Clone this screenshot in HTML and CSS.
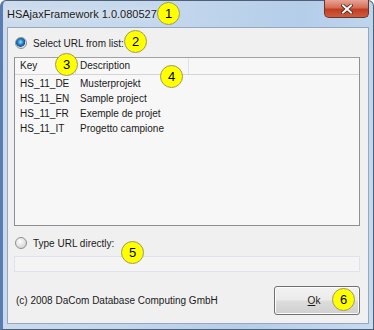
FILE: index.html
```html
<!DOCTYPE html>
<html lang="en">
<head>
    <meta charset="UTF-8">
    <title>HSAjaxFramework</title>
    <link rel="stylesheet" href="styles.css">
</head>
<body>
    <div class="window">
        <div class="titlebar">
            <span class="title">HSAjaxFramework 1.0.080527</span>
            <div class="close">
                <svg width="12" height="10" viewBox="0 0 12 10">
                    <path d="M2 1.5 L10 8.5 M10 1.5 L2 8.5" stroke="#4a2018" stroke-width="3.6" stroke-linecap="square"/>
                    <path d="M2 1.5 L10 8.5 M10 1.5 L2 8.5" stroke="#ffffff" stroke-width="2" stroke-linecap="square"/>
                </svg>
            </div>
        </div>
        <div class="client">
            <div class="option">
                <span class="radio checked"></span>
                <span>Select URL from list:</span>
            </div>
            <div class="listbox">
                <div class="list-head">
                    <span class="col-key">Key</span>
                    <span class="col-desc">Description</span>
                    <span class="col-rest"></span>
                </div>
                <div class="list-rows">
                    <div class="list-row"><span class="col-key">HS_11_DE</span><span class="col-desc">Musterprojekt</span></div>
                    <div class="list-row"><span class="col-key">HS_11_EN</span><span class="col-desc">Sample project</span></div>
                    <div class="list-row"><span class="col-key">HS_11_FR</span><span class="col-desc">Exemple de projet</span></div>
                    <div class="list-row"><span class="col-key">HS_11_IT</span><span class="col-desc">Progetto campione</span></div>
                </div>
            </div>
            <div class="option option-url">
                <span class="radio"></span>
                <span>Type URL directly:</span>
            </div>
            <div class="url-input"></div>
            <div class="footer">
                <span class="copyright">(c) 2008 DaCom Database Computing GmbH</span>
                <div class="ok-button"><u>O</u>k</div>
            </div>
        </div>

        <span class="badge badge-1">1</span>
        <span class="badge badge-2">2</span>
        <span class="badge badge-3">3</span>
        <span class="badge badge-4">4</span>
        <span class="badge badge-5">5</span>
        <span class="badge badge-6">6</span>
    </div>
</body>
</html>
```

FILE: styles.css
```css
body {
    margin: 0;
    width: 374px;
    height: 330px;
    overflow: hidden;
    background: #ffffff;
    font-family: "Liberation Sans", Arial, sans-serif;
}
.window {
    position: relative;
    box-sizing: border-box;
    width: 374px;
    height: 330px;
    display: flex;
    flex-direction: column;
    background: linear-gradient(100deg, #cddcec 0%, #c3d7ed 40%, #b4cde9 70%, #c6dbf1 100%);
    border: 1px solid #4e5f76;
    border-left: 3px solid #5b7cb2;
    border-radius: 6px 6px 0 0;
}
.titlebar {
    height: 26px;
    display: flex;
    align-items: flex-start;
    justify-content: space-between;
}
.title {
    margin: 7px 0 0 4px;
    font-size: 11px;
    color: #1a1a1a;
    text-shadow: 0 0 6px #ffffff;
}
.close {
    width: 43px;
    height: 17px;
    margin: -1px 4px 0 0;
    display: flex;
    align-items: center;
    justify-content: center;
    background: linear-gradient(#e7a496 0%, #d66d56 45%, #c13e22 55%, #cf5c3f 100%);
    border: 1px solid #6c3328;
    border-top: none;
    border-radius: 0 0 5px 5px;
}
.client {
    flex: 1;
    margin: 0 4px 5px 4px;
    display: flex;
    flex-direction: column;
    background: #f0f0f0;
    border: 1px solid #98a8bc;
    padding: 0 8px 0 6px;
    font-size: 10px;
    color: #1a1a1a;
}
.option {
    display: flex;
    align-items: center;
    gap: 6px;
    height: 14px;
    margin: 8px 0 0 0;
}
.option-url {
    margin-top: 10px;
}
.radio {
    box-sizing: border-box;
    width: 12px;
    height: 12px;
    margin-left: 1px;
    border-radius: 50%;
    border: 1px solid #8e8f8f;
    background: radial-gradient(circle at 40% 35%, #ffffff 0%, #e6e6e6 45%, #c9c9c9 100%);
}
.radio.checked {
    background: radial-gradient(circle at 45% 40%, #9fe0f7 0%, #2f8bd0 30%, #0b4e96 55%, #dedede 62%, #f4f4f4 100%);
}
.listbox {
    box-sizing: border-box;
    height: 169px;
    margin-top: 7px;
    background: #f7f7f7;
    border: 1px solid #8c9094;
    border-top-color: #a0a0a0;
}
.list-head {
    display: flex;
    height: 16px;
    border-bottom: 1px solid #d5d5d5;
    background: #f7f7f7;
    line-height: 16px;
}
.list-head .col-key,
.list-head .col-desc {
    border-right: 1px solid #e2e2e2;
}
.col-key {
    box-sizing: border-box;
    width: 61px;
    padding-left: 5px;
    flex: none;
}
.col-desc {
    box-sizing: border-box;
    width: 113px;
    padding-left: 4px;
    flex: none;
}
.col-rest {
    flex: 1;
}
.list-rows {
    padding-top: 1px;
}
.list-row {
    display: flex;
    height: 15px;
    line-height: 15px;
}
.url-input {
    box-sizing: border-box;
    height: 16px;
    margin-top: 6px;
    background: #f4f4f4;
    border: 1px solid #dfe2e6;
}
.footer {
    display: flex;
    align-items: center;
    justify-content: space-between;
    margin-top: 14px;
}
.copyright {
    margin-left: 2px;
}
.ok-button {
    box-sizing: border-box;
    width: 86px;
    height: 29px;
    padding-right: 6px;
    display: flex;
    align-items: center;
    justify-content: center;
    background: linear-gradient(#f2f2f2 0%, #ebebeb 48%, #dddddd 52%, #cfcfcf 100%);
    border: 1px solid #707070;
    border-radius: 3px;
    box-shadow: inset 0 0 0 1px #fcfcfc;
}
.badge {
    position: absolute;
    box-sizing: border-box;
    width: 23px;
    height: 23px;
    border-radius: 50%;
    background: #ffff00;
    border: 1px solid #9c9c5a;
    display: flex;
    align-items: center;
    justify-content: center;
    font-size: 13px;
    color: #000000;
}
.badge-1 { left: 154px; top: 1px; }
.badge-2 { left: 121px; top: 29px; }
.badge-3 { left: 52px; top: 52px; }
.badge-4 { left: 157px; top: 64px; }
.badge-5 { left: 118px; top: 240px; }
.badge-6 { left: 329px; top: 287px; }
```
